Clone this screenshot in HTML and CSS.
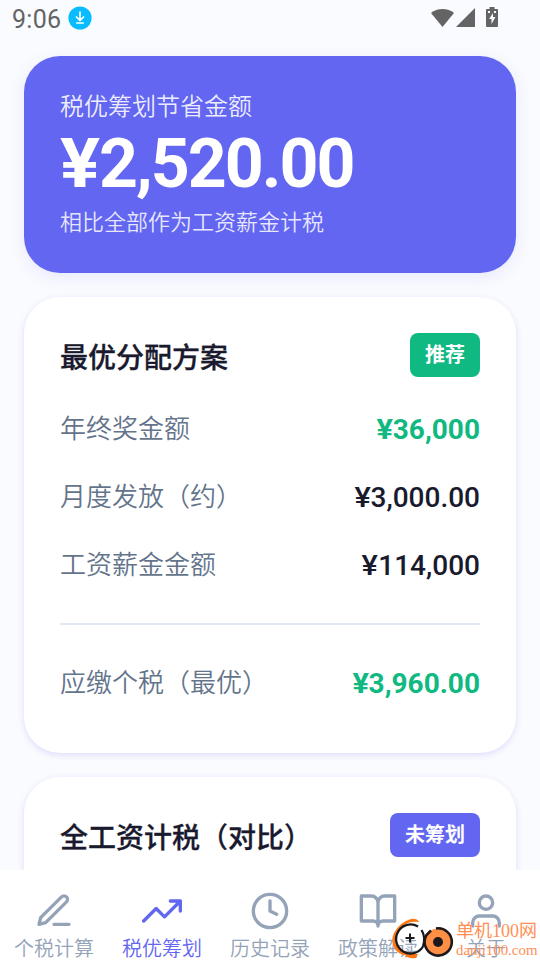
FILE: index.html
```html
<!DOCTYPE html>
<html lang="zh-CN">
<head>
<meta charset="utf-8">
<title>税优筹划</title>
<link rel="stylesheet" href="styles.css">
</head>
<body>
<header class="status">
  <span class="time">9:06</span>
  <svg class="download" width="24" height="24" viewBox="0 0 24 24"><circle cx="12" cy="12" r="11.6" fill="#08bcff"/><path d="M12 5.500v8M8 10.500l4 4 4-4M8.200 17h7.600" fill="none" stroke="#fff" stroke-width="1.7"/></svg>
  <svg class="system" width="70" height="24" viewBox="0 0 70 24" fill="#646464"><path d="M0 7C6 1.500 17 1.500 23 7L11.500 21Z"/><path d="M25 21L44 2v19Z"/><path d="M58.500 1h5v2H66q1 0 1 1v16q0 1-1 1H56q-1 0-1-1V4q0-1 1-1h2.500Z"/><path d="M62 7l-4 6h2.500v5l4-7H62ZM57 5h2v2h-2ZM63 5h2v2h-2Z" fill="#fafbfe"/></svg>
</header>
<main class="content">
  <section class="hero">
    <div class="hero-label">税优筹划节省金额</div>
    <div class="hero-amount"><span class="yen">¥</span>2,520.00</div>
    <div class="hero-note">相比全部作为工资薪金计税</div>
  </section>
  <section class="card">
    <div class="card-head"><h2>最优分配方案</h2><span class="badge green">推荐</span></div>
    <div class="row"><span>年终奖金额</span><b class="positive"><span class="yen">¥</span>36,000</b></div>
    <div class="row"><span>月度发放（约）</span><b><span class="yen">¥</span>3,000.00</b></div>
    <div class="row"><span>工资薪金金额</span><b><span class="yen">¥</span>114,000</b></div>
    <hr>
    <div class="row"><span>应缴个税（最优）</span><b class="positive"><span class="yen">¥</span>3,960.00</b></div>
  </section>
  <section class="card">
    <div class="card-head"><h2>全工资计税（对比）</h2><span class="badge">未筹划</span></div>
  </section>
</main>
<nav class="tabs">
  <div class="tab"><svg viewBox="0 0 24 24"><path d="M12 20h9M16.500 3.500a2.121 2.121 0 0 1 3 3L7 19l-4 1 1-4Z"/></svg><span>个税计算</span></div>
  <div class="tab active"><svg viewBox="0 0 24 24"><path d="M23 6l-9.500 9.500-5-5L1 18M17 6h6v6"/></svg><span>税优筹划</span></div>
  <div class="tab"><svg viewBox="0 0 24 24"><circle cx="12" cy="12" r="10"/><path d="M12 6v6l4 2"/></svg><span>历史记录</span></div>
  <div class="tab"><svg viewBox="0 0 24 24"><path d="M2 3h6a4 4 0 0 1 4 4v14a3 3 0 0 0-3-3H2ZM22 3h-6a4 4 0 0 0-4 4v14a3 3 0 0 1 3-3h7Z"/></svg><span>政策解读</span></div>
  <div class="tab"><svg viewBox="0 0 24 24"><path d="M20 21v-2a4 4 0 0 0-4-4H8a4 4 0 0 0-4 4v2"/><circle cx="12" cy="7" r="4"/></svg><span>关于</span></div>
</nav>
<aside class="mark">
  <svg width="65" height="43" viewBox="0 0 65 43" fill="none">
    <path d="M28 5Q26 1 20 2Q9 5 3 16Q-1 25 4 32Q7 37 14 38Q17 42 25 41L27 37Q12 38 6 29Q1 19 10 10Q17 4 28 5Z" fill="#ff7712"/>
    <path d="M27 9.500A14.500 14.500 0 1 0 32 29.500M30.500 13Q35 20 32 29.500" stroke="#1d191b" stroke-width="2.300"/>
    <path d="M19 16.500v9M14.500 21h9" stroke="#1d191b" stroke-width="2"/>
    <circle cx="47" cy="25" r="13.500" fill="#ff8f45"/>
    <path d="M45 11.500A13.600 13.600 0 1 1 35.500 18L40 13.500" stroke="#1d191b" stroke-width="2.600"/>
    <circle cx="47" cy="25" r="5" fill="#1d191b"/>
  </svg>
  <div class="mark-text"><div class="mark-name">单机<i>100</i>网</div><div class="mark-url">danji100.com</div></div>
</aside>
</body>
</html>
```
FILE: styles.css
```css
* { box-sizing: border-box; }
body { margin: 0; height: 960px; overflow: hidden; background: #fafbfe; color: #1a1a2e; font-family: Roboto, "Noto Sans CJK SC", sans-serif; display: flex; flex-direction: column; position: relative; }
.status { height: 56px; flex: none; display: flex; align-items: flex-start; padding: 6px 39px 0 12px; color: #646464; }
.time { font-size: 25px; line-height: 28px; letter-spacing: .3px; }
.download { margin-left: 7px; }
.system { margin-left: auto; }
.content { flex: 1; min-height: 0; overflow: hidden; padding: 0 24px; margin-top: -16px; padding-top: 16px; display: flex; flex-direction: column; gap: 24px; }
.hero { flex: none; height: 217px; padding: 33px 36px 0; border-radius: 36px; background: #6366f1; color: #fff; box-shadow: 0 4px 16px rgba(99,102,241,.12); }
.hero-label { font-size: 24px; line-height: 36px; font-weight: 350; color: rgba(255,255,255,.9); }
.hero-amount { font-size: 68px; line-height: 78px; font-weight: 700; letter-spacing: -2px; }
.hero-note { font-size: 22px; line-height: 40px; font-weight: 350; color: rgba(255,255,255,.85); }
.yen { display: inline-block; transform: scaleX(1.1); transform-origin: right; }
.hero .yen { transform-origin: left; margin-right: 4.5px; }
.card { flex: none; padding: 36px; background: #fff; border-radius: 36px; box-shadow: 0 2px 6px rgba(99,102,241,.2); }
.card-head { height: 44px; margin-bottom: 18px; display: flex; justify-content: space-between; align-items: center; }
h2 { margin: 0; padding-top: 7px; font-size: 28px; line-height: 40px; font-weight: 500; -webkit-text-stroke: .3px currentColor; }
.badge { height: 44px; padding: 0 15px; border-radius: 8px; background: #6366f1; color: #fff; font-size: 20px; line-height: 45px; font-weight: 600; }
.green { background: #10b981; }
.row { height: 68px; display: flex; justify-content: space-between; align-items: center; font-size: 26px; color: #64748b; }
.row > span { padding-bottom: 5px; font-weight: 350; }
.row b { font-size: 28px; font-weight: 500; color: #1a1a2e; }
.row .positive { color: #10b981; font-weight: 700; }
hr { height: 2px; margin: 24px 0; border: 0; background: #e2e8f0; }
.tabs { height: 90px; flex: none; display: flex; background: #fff; }
.tab { flex: 1; display: flex; flex-direction: column; align-items: center; padding-top: 21px; color: #94a3b8; font-size: 20px; line-height: 26px; font-weight: 350; white-space: nowrap; }
.tab svg { flex: none; width: 40px; height: 40px; margin-bottom: 5px; fill: none; stroke: currentColor; stroke-width: 2; stroke-linecap: round; stroke-linejoin: round; }
.active { color: #6366f1; }
.mark { position: absolute; left: 391px; top: 917px; display: flex; color: #ff8f55; }
.mark-text { width: 84px; white-space: nowrap; }
.mark-name { font: 18px/25px "Noto Sans CJK SC", sans-serif; }
.mark-name i { font-style: normal; font-family: "Liberation Serif", serif; }
.mark-url { font: 14.900px/12px "Liberation Serif", serif; }
```
